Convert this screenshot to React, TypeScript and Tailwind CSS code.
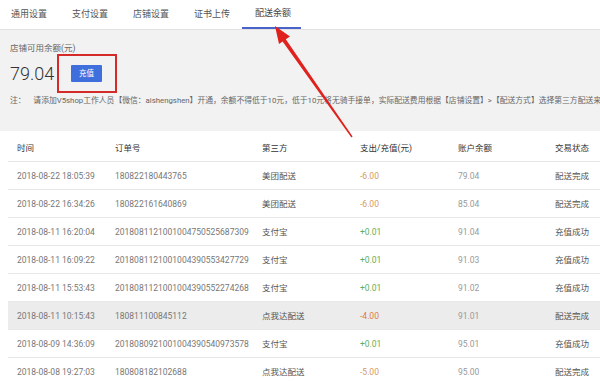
const tabs = ["通用设置", "支付设置", "店铺设置", "证书上传", "配送余额"];

type Row = {
  time: string;
  order: string;
  party: string;
  amount: string;
  balance: string;
  status: string;
  active?: boolean;
};

const rows: Row[] = [
  { time: "2018-08-22 18:05:39", order: "180822180443765", party: "美团配送", amount: "-6.00", balance: "79.04", status: "配送完成" },
  { time: "2018-08-22 16:34:26", order: "180822161640869", party: "美团配送", amount: "-6.00", balance: "85.04", status: "配送完成" },
  { time: "2018-08-11 16:20:04", order: "2018081121001004750525687309", party: "支付宝", amount: "+0.01", balance: "91.04", status: "充值成功" },
  { time: "2018-08-11 16:09:22", order: "2018081121001004390553427729", party: "支付宝", amount: "+0.01", balance: "91.03", status: "充值成功" },
  { time: "2018-08-11 15:53:43", order: "2018081121001004390552274268", party: "支付宝", amount: "+0.01", balance: "91.02", status: "充值成功" },
  { time: "2018-08-11 10:15:43", order: "180811100845112", party: "点我达配送", amount: "-4.00", balance: "91.01", status: "配送完成", active: true },
  { time: "2018-08-09 14:36:09", order: "2018080921001004390540973578", party: "支付宝", amount: "+0.01", balance: "95.01", status: "充值成功" },
  { time: "2018-08-08 19:27:03", order: "180808182102688", party: "点我达配送", amount: "-5.00", balance: "95.00", status: "配送完成" },
];

const cols = "grid grid-cols-[98px_147px_98px_98px_97px_1fr] pl-[9px] items-center";

function Arrow() {
  return (
    <svg className="absolute left-0 top-0 pointer-events-none" width="600" height="381">
      <polygon
        points="275,26 279,44 282.6,41.4 351.4,137.4 352.6,136.6 285.8,39.2 290,36.5"
        fill="#e0221e"
      />
    </svg>
  );
}

export default function App() {
  return (
    <div className="relative w-[600px] h-[381px] overflow-hidden bg-white font-['Roboto','Noto_Sans_CJK_SC',sans-serif] text-[8.5px]">
      {/* tabs */}
      <div className="h-[30px] flex border-b border-[#e2e2e2] bg-white pt-[1px]">
        {tabs.map((t, i) => (
          <div
            key={t}
            className={
              i === 4
                ? "w-[59px] -ml-[2px] flex items-center pl-[13px] border-b-2 border-[#4a63c8] text-[9px] text-[#444]"
                : "w-[61px] flex items-center pl-[11px] text-[9px] text-[#555]"
            }
          >
            {t}
          </div>
        ))}
      </div>

      {/* balance */}
      <div className="h-[101px] bg-[#f2f2f2] pl-[10px] flex flex-col">
        <div className="mt-[12px] h-[12px] leading-[12px] text-[#666]">店铺可用余额(元)</div>
        <div className="h-[39px] flex items-center">
          <span className="w-[47px] text-[18px] font-light text-[#333] leading-none">79.04</span>
          <div className="h-[39px] w-[60px] border-2 border-[#d42a2a] flex items-center justify-center pr-[1px]">
            <button className="w-[31px] h-[17px] bg-[#3f6fdc] text-white text-[7.5px] rounded-[1px]">充值</button>
          </div>
        </div>
        <div className="mt-[2px] h-[12px] leading-[12px] whitespace-nowrap overflow-hidden text-[7.8px] text-[#666] w-[590px]">
          注：&nbsp;&nbsp;&nbsp;&nbsp;请添加V5shop工作人员【微信：aishengshen】开通，余额不得低于10元，低于10元将无骑手接单，实际配送费用根据【店铺设置】&gt;【配送方式】选择第三方配送来收取
        </div>
      </div>

      {/* table */}
      <div className="ml-[8px]">
        <div className={`${cols} h-[31px] pt-[4px] border-b border-[#e6e6e6] text-[#333]`}>
          <span>时间</span>
          <span>订单号</span>
          <span>第三方</span>
          <span>支出/充值(元)</span>
          <span>账户余额</span>
          <span>交易状态</span>
        </div>
        {rows.map((r) => (
          <div
            key={r.time}
            className={`${cols} h-[28px] pt-[2px] border-b border-[#e8e8e8] ${r.active ? "bg-[#ececec]" : ""}`}
          >
            <span className="text-[#777]">{r.time}</span>
            <span className="text-[#777]">{r.order}</span>
            <span className="text-[#555]">{r.party}</span>
            <span className={r.amount.startsWith("+") ? "text-[#5fae5a]" : r.active ? "text-[#e07a3c]" : "text-[#d69a5c]"}>
              {r.amount}
            </span>
            <span className="text-[#999]">{r.balance}</span>
            <span className="text-[#555]">{r.status}</span>
          </div>
        ))}
      </div>

      <Arrow />
    </div>
  );
}
